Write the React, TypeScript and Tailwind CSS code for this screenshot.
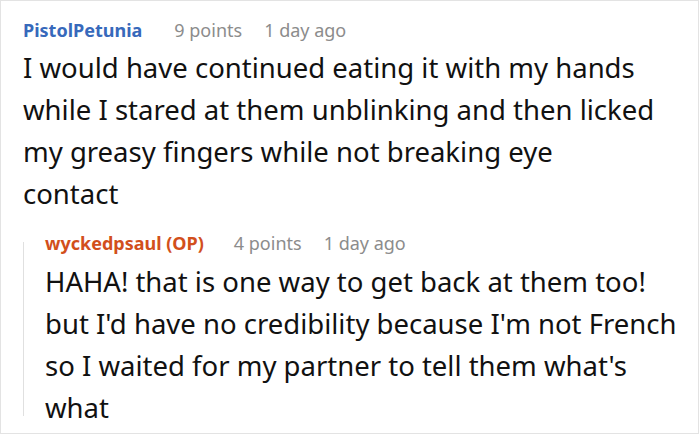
import React from 'react';

const font = { fontFamily: '"Noto Sans", "DejaVu Sans", sans-serif' };

interface CommentMetaProps {
  author: string;
  color: string;
  points: string;
  age: string;
  gap: string;
}

const CommentMeta: React.FC<CommentMetaProps> = ({ author, color, points, age, gap }) => (
  <div className="flex items-baseline whitespace-nowrap text-[18px] leading-[24px]">
    <span className={`font-bold ${color}`}>{author}</span>
    <span className={`${gap} text-[#8c8c8c]`}>{points}</span>
    <span className="ml-[22px] text-[#8c8c8c]">{age}</span>
  </div>
);

const Lines: React.FC<{ lines: string[] }> = ({ lines }) => (
  <p className="text-[27.5px] leading-[42px] text-[#111]">
    {lines.map((l) => (
      <span key={l} className="block whitespace-nowrap">{l}</span>
    ))}
  </p>
);

const App: React.FC = () => {
  return (
    <div className="w-[699px] h-[434px] bg-white border border-[#e3e3e3] overflow-hidden" style={font}>
      <div className="pl-[22px] pt-[17px]">
        <CommentMeta
          author="PistolPetunia"
          color="text-[#3769bb]"
          points="9 points"
          age="1 day ago"
          gap="ml-[32px]"
        />
        <div className="mt-[5px]">
          <Lines
            lines={[
              'I would have continued eating it with my hands',
              'while I stared at them unblinking and then licked',
              'my greasy fingers while not breaking eye',
              'contact',
            ]}
          />
        </div>
        <div className="mt-[16px] flex">
          <div className="mt-[11px] mb-[13px] w-px bg-[#e0e0e0]" />
          <div className="pl-[21px]">
            <CommentMeta
              author="wyckedpsaul (OP)"
              color="text-[#d24f1c]"
              points="4 points"
              age="1 day ago"
              gap="ml-[30px]"
            />
            <div className="mt-[6px]">
              <Lines
                lines={[
                  'HAHA! that is one way to get back at them too!',
                  "but I'd have no credibility because I'm not French",
                  "so I waited for my partner to tell them what's",
                  'what',
                ]}
              />
            </div>
          </div>
        </div>
      </div>
    </div>
  );
};

export default App;
